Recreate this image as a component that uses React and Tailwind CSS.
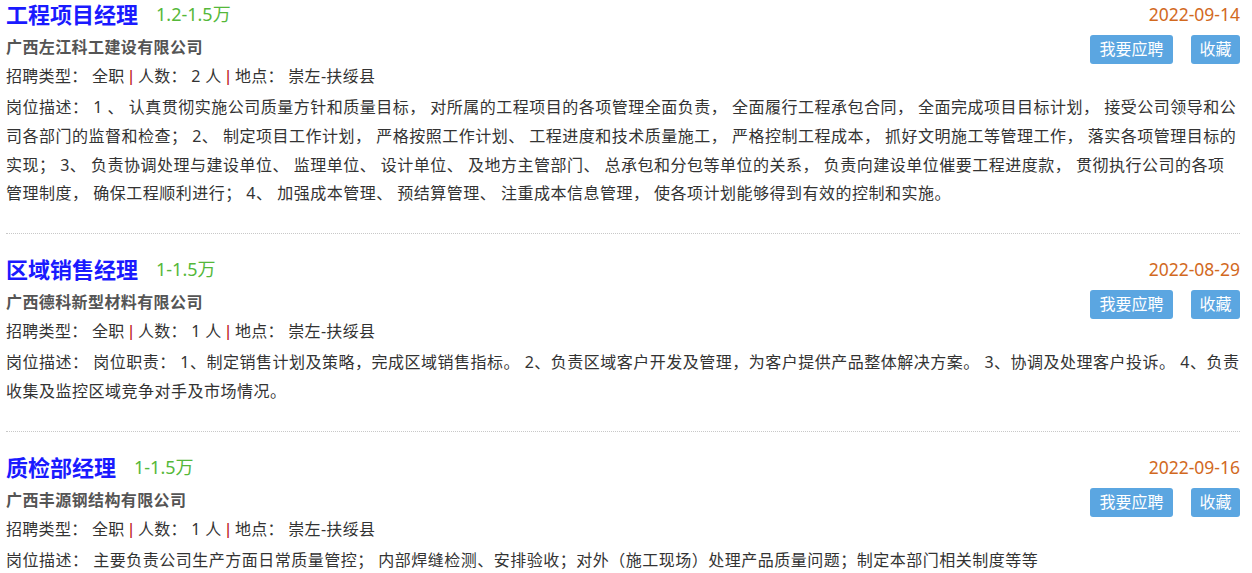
import React from "react";

const jobs = [
  {
    title: "工程项目经理",
    salary: "1.2-1.5万",
    date: "2022-09-14",
    company: "广西左江科工建设有限公司",
    count: "2",
    desc: "岗位描述： 1 、 认真贯彻实施公司质量方针和质量目标， 对所属的工程项目的各项管理全面负责， 全面履行工程承包合同， 全面完成项目目标计划， 接受公司领导和公司各部门的监督和检查； 2、 制定项目工作计划， 严格按照工作计划、 工程进度和技术质量施工， 严格控制工程成本， 抓好文明施工等管理工作， 落实各项管理目标的实现； 3、 负责协调处理与建设单位、 监理单位、 设计单位、 及地方主管部门、 总承包和分包等单位的关系， 负责向建设单位催要工程进度款， 贯彻执行公司的各项管理制度， 确保工程顺利进行； 4、 加强成本管理、 预结算管理、 注重成本信息管理， 使各项计划能够得到有效的控制和实施。",
  },
  {
    title: "区域销售经理",
    salary: "1-1.5万",
    date: "2022-08-29",
    company: "广西德科新型材料有限公司",
    count: "1",
    desc: "岗位描述： 岗位职责： 1、制定销售计划及策略，完成区域销售指标。 2、负责区域客户开发及管理，为客户提供产品整体解决方案。 3、协调及处理客户投诉。 4、负责收集及监控区域竞争对手及市场情况。",
  },
  {
    title: "质检部经理",
    salary: "1-1.5万",
    date: "2022-09-16",
    company: "广西丰源钢结构有限公司",
    count: "1",
    desc: "岗位描述： 主要负责公司生产方面日常质量管控； 内部焊缝检测、安排验收；对外（施工现场）处理产品质量问题；制定本部门相关制度等等",
  },
];

function Pipe() {
  return (
    <span className="text-[#bb1515] font-['Liberation_Sans',sans-serif]">|</span>
  );
}

function Job({ job, first }) {
  return (
    <div
      className={
        (first ? "pt-0 " : "pt-[21px] ") +
        "pb-[25px] border-b border-dotted border-[#c8c8c8]"
      }
    >
      <div className="flex justify-between">
        <div>
          <div className="flex items-center h-[28px]">
            <span className="text-[22px] font-bold text-[#1a1aff] leading-[28px]">
              {job.title}
            </span>
            <span className="ml-[18px] text-[18px] text-[#55b83a] leading-[28px]">
              {job.salary}
            </span>
          </div>
          <div className="mt-[5px] text-[16px] tracking-[0.4px] font-bold text-[#555555] leading-[29px]">
            {job.company}
          </div>
          <div className="text-[16px] tracking-[0.3px] text-[#333333] leading-[29px]">
            招聘类型： 全职 <Pipe /> 人数： {job.count} 人 <Pipe /> 地点： 崇左-扶绥县
          </div>
        </div>
        <div className="flex flex-col items-end">
          <div className="h-[28px] leading-[28px] text-[17.5px] text-[#d2691e]">
            {job.date}
          </div>
          <div className="mt-[7px] flex gap-[18px]">
            <button className="h-[29px] w-[83px] rounded-[3px] bg-[#5ba6e1] text-white text-[16px] leading-[29px]">
              我要应聘
            </button>
            <button className="h-[29px] w-[49px] rounded-[3px] bg-[#5ba6e1] text-white text-[16px] leading-[29px]">
              收藏
            </button>
          </div>
        </div>
      </div>
      <div className="mt-[2px] text-[16px] tracking-[0.5px] text-[#333333] leading-[28.8px]">
        {job.desc}
      </div>
    </div>
  );
}

export default function App() {
  return (
    <div
      className="w-[1252px] h-[573px] overflow-hidden bg-white pl-[6px] pr-[12px]"
      style={{ fontFamily: '"Noto Sans", "Noto Sans CJK SC", sans-serif' }}
    >
      {jobs.map((j, i) => (
        <Job key={i} job={j} first={i === 0} />
      ))}
    </div>
  );
}
